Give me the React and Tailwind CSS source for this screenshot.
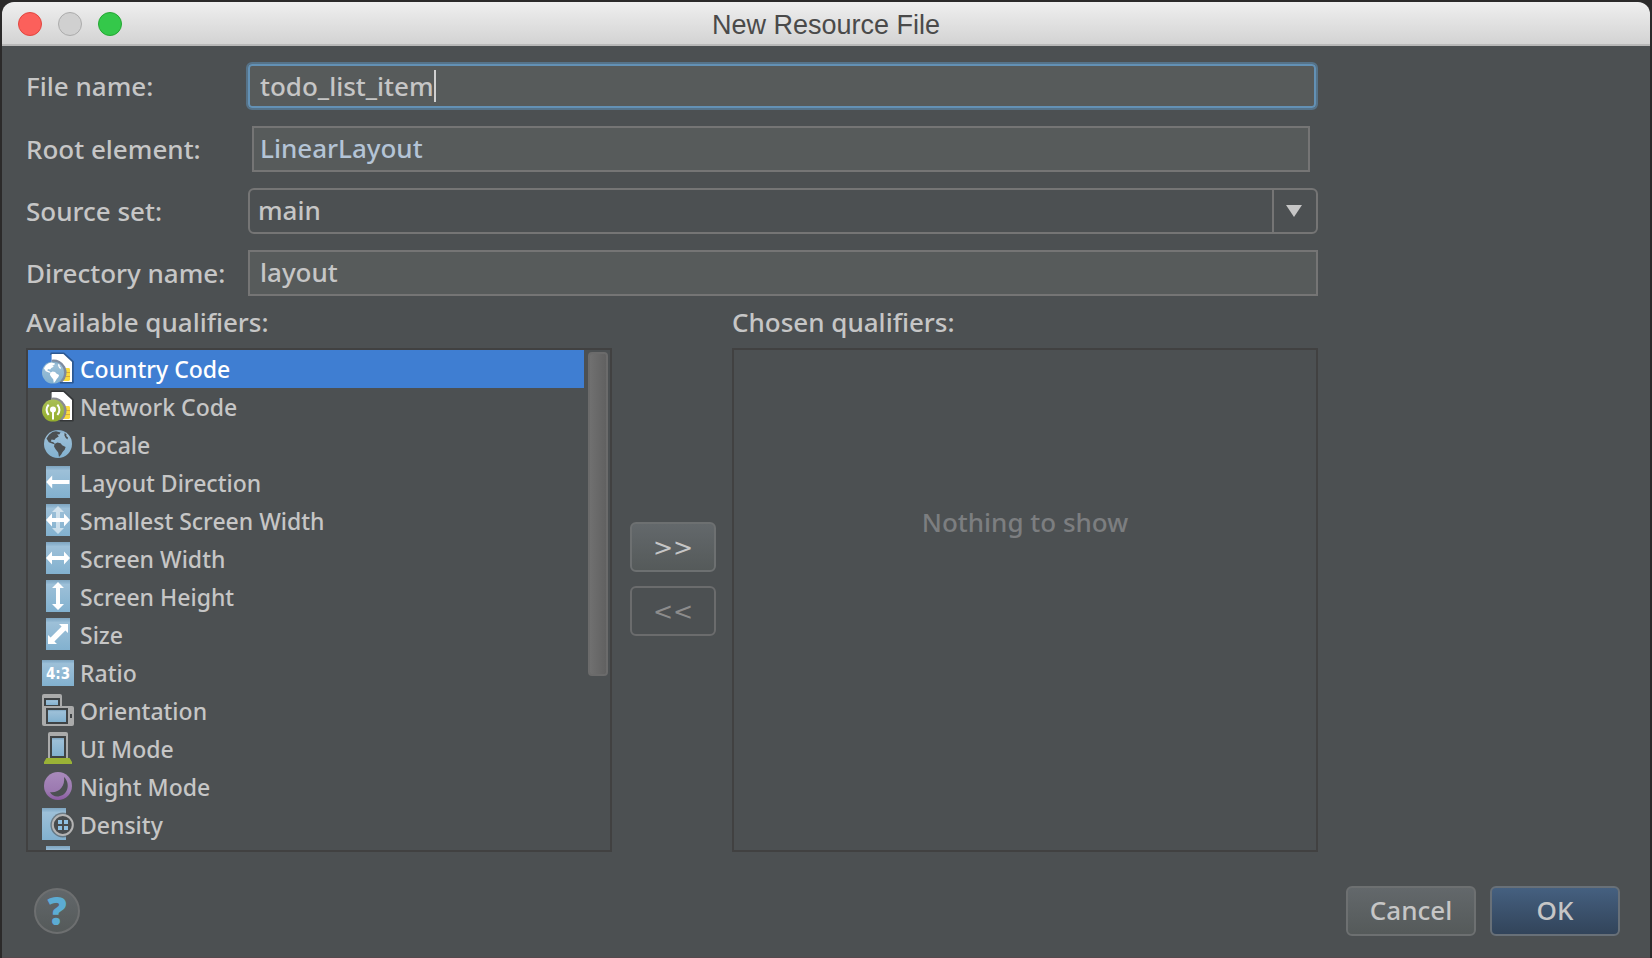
import React, { useState } from "react";

const tile = "url(#tile)";

function Icon({ children }) {
  return (
    <svg viewBox="0 0 32 32" className="mb-0.5 size-8 shrink-0" aria-hidden="true">
      {children}
    </svg>
  );
}

function Gradients() {
  return (
    <svg className="absolute size-0" aria-hidden="true">
      <defs>
        <linearGradient id="tile" x1="0" y1="0" x2="0" y2="1">
          <stop offset="0" stopColor="#7fa5bf" />
          <stop offset="0.09" stopColor="#8fb5d0" />
          <stop offset="0.14" stopColor="#9dc0d8" />
          <stop offset="1" stopColor="#82b1cf" />
        </linearGradient>
        <linearGradient id="green" x1="0" y1="0" x2="0" y2="1">
          <stop offset="0" stopColor="#a9bf56" />
          <stop offset="1" stopColor="#94ae2c" />
        </linearGradient>
        <linearGradient id="purple" x1="0" y1="0" x2="0" y2="1">
          <stop offset="0" stopColor="#a88abb" />
          <stop offset="0.7" stopColor="#9b78b0" />
          <stop offset="1" stopColor="#8c5ba3" />
        </linearGradient>
      </defs>
    </svg>
  );
}

function Continents({ fill }) {
  return (
    <g fill={fill}>
      <path d="M4.5 10.5 7 6.8 10.5 4 14 3.2 18.6 4.4 17.2 6.6 15.2 6.2 16.8 8.6 13.8 10.2 12.4 12 9.6 11.4 8.8 13.4 11.4 14.2 13.4 16.4 10.8 15.8 6.8 14.2Z" />
      <path d="M12.6 16 15.4 14.6 18.6 15.2 20.2 17.2 23.6 19 22.8 21.6 20.6 24 19.2 26.6 17 29 16.2 24.4 13.8 21.4 12 18.6Z" />
      <path d="M22.6 4.8 24.6 6.4 24.2 8 26 9.6 25.4 11.6 23.6 9.8 22.4 7.4Z" />
    </g>
  );
}

function SimCard({ gap }) {
  return (
    <>
      <path
        d="M9.4 3V1.4H21.8L30.8 9.8V30.6H18"
        fill="none"
        stroke="#000"
        strokeOpacity="0.3"
        strokeWidth="2"
        strokeLinejoin="round"
      />
      <path d="M9.6 2H21.4L30 10V30H12L9.6 20Z" fill="#fff" />
      <rect x="20" y="16" width="8" height="13" rx="1.4" fill="#fbdc3c" />
      <path d="M22 20.5H28M22 24.5H28" stroke="#d9a93c" strokeWidth="1.2" />
      <path d="M9.6 7.7A13 13 0 0 1 20.5 30H11V20Z" fill={gap} />
    </>
  );
}

function CountryIcon() {
  return (
    <Icon>
      <SimCard gap="#7d8ba0" />
      <circle cx="11" cy="20.6" r="11" fill={tile} />
      <g transform="translate(-1.6 8) scale(.79)">
        <Continents fill="#fff" />
      </g>
    </Icon>
  );
}

function NetworkIcon() {
  return (
    <Icon>
      <SimCard gap="#8a8c90" />
      <circle cx="11" cy="20.6" r="11" fill="url(#green)" />
      <circle cx="11" cy="19.6" r="3" fill="#fff" />
      <path
        d="M11 20V29.4M6.6 14.6Q2.6 19.8 6.6 25M15.4 14.6Q19.4 19.8 15.4 25"
        fill="none"
        stroke="#fff"
        strokeWidth="2"
      />
    </Icon>
  );
}

function LocaleIcon() {
  return (
    <Icon>
      <circle cx="16" cy="16" r="14" fill={tile} />
      <Continents fill="#4c5052" />
    </Icon>
  );
}

const horizontalArrow = "M4 16 10 9.6V14H22V9.6L28 16 22 22.4V18H10V22.4Z";
const verticalArrow = "M16 2 22 8H18V24H22L16 30 10 24H14V8H10Z";

function Tile({ children }) {
  return (
    <Icon>
      <rect x="4" width="24" height="32" fill={tile} />
      {children}
    </Icon>
  );
}

function DirectionIcon() {
  return (
    <Tile>
      <path d="M4.2 16 10.2 9.6V14H27.4V18H10.2V22.4Z" fill="#fff" />
    </Tile>
  );
}

function SmallestIcon() {
  return (
    <Tile>
      <path d={verticalArrow} fill="#fff" fillOpacity="0.55" />
      <path d={horizontalArrow} fill="#fff" />
    </Tile>
  );
}

function WidthIcon() {
  return (
    <Tile>
      <path d={horizontalArrow} fill="#fff" />
    </Tile>
  );
}

function HeightIcon() {
  return (
    <Tile>
      <path d={verticalArrow} fill="#fff" />
    </Tile>
  );
}

function SizeIcon() {
  return (
    <Tile>
      <path d="M26 6V15L23.4 12.4 12.4 23.4 15 26H6V17L8.6 19.6 19.6 8.6 17 6Z" fill="#fff" />
    </Tile>
  );
}

function RatioIcon() {
  return (
    <Icon>
      <rect y="4" width="32" height="26" fill={tile} />
      <text
        x="16"
        y="23"
        textAnchor="middle"
        fill="#fff"
        className="font-['DejaVu_Sans_Condensed','DejaVu_Sans',sans-serif] text-[15px] font-bold"
      >
        4:3
      </text>
    </Icon>
  );
}

function OrientationIcon() {
  return (
    <Icon>
      <rect width="20" height="20" rx="2" fill="#aaabab" />
      <rect x="2" y="4" width="16" height="8" fill="#3f4345" />
      <rect x="4" y="6" width="12" height="5" fill={tile} />
      <rect y="12" width="32" height="20" rx="2" fill="#aaabab" />
      <rect x="4" y="14" width="22" height="16" fill="#3f4345" />
      <rect x="6" y="16" width="18" height="12" fill={tile} />
      <rect x="28" y="20" width="2" height="4" fill="#3f4345" />
    </Icon>
  );
}

function UiModeIcon() {
  return (
    <Icon>
      <path d="M8 0H24A2 2 0 0 1 26 2V26H6V2A2 2 0 0 1 8 0Z" fill="#aaabab" />
      <rect x="8" y="4" width="16" height="22" fill="#3f4345" />
      <rect x="10" y="6" width="12" height="18" fill={tile} />
      <path d="M4.4 26H27.6L30 30V32H2V30Z" fill="#9ab236" />
    </Icon>
  );
}

function NightIcon() {
  return (
    <Icon>
      <circle cx="16" cy="16" r="14" fill="url(#purple)" />
      <path d="M22 7C29 14 25.6 25.6 16.4 26.4 12.4 26.7 9.6 24.8 8 22.2 17 23.4 23.4 16 22 7Z" fill="#4c5052" />
    </Icon>
  );
}

function DensityIcon() {
  return (
    <Icon>
      <rect width="24" height="32" fill={tile} />
      <circle cx="20.8" cy="17" r="12.4" fill="#4c5052" fillOpacity="0.6" />
      <circle cx="20.8" cy="17" r="10" fill="#484c4e" stroke="#b4b4b4" strokeWidth="2" />
      <path d="M16 12H20V16H16ZM22 12H26V16H22ZM16 18H20V22H16ZM22 18H26V22H22Z" fill="#8fc0e2" />
    </Icon>
  );
}

const qualifiers = [
  ["Country Code", CountryIcon],
  ["Network Code", NetworkIcon],
  ["Locale", LocaleIcon],
  ["Layout Direction", DirectionIcon],
  ["Smallest Screen Width", SmallestIcon],
  ["Screen Width", WidthIcon],
  ["Screen Height", HeightIcon],
  ["Size", SizeIcon],
  ["Ratio", RatioIcon],
  ["Orientation", OrientationIcon],
  ["UI Mode", UiModeIcon],
  ["Night Mode", NightIcon],
  ["Density", DensityIcon],
  ["", Tile],
];

const fieldBox = "h-[46px] w-full border-2 border-[#757575] bg-[#575b5b] pb-0.5 outline-none";

function Row({ id, label, children }) {
  return (
    <div className="grid grid-cols-[222px_1fr] items-center">
      <label htmlFor={id}>{label}</label>
      {children}
    </div>
  );
}

export default function App() {
  const [fileName, setFileName] = useState("todo_list_item");
  const [selected, setSelected] = useState(0);

  return (
    <div className="flex min-h-screen flex-col bg-[#2b2a2a] px-0.5 pt-0.5 font-['Noto_Sans','Open_Sans',sans-serif] text-[26px] leading-9 font-medium text-[#c6c6c6]">
      <Gradients />
      <header className="grid h-11 grid-cols-[1fr_auto_1fr] items-center rounded-t-xl bg-linear-to-b from-[#efefef] to-[#d2d2d2] px-4 inset-shadow-[0_-2px_0_#b8b8b8]">
        <div className="flex gap-4">
          <button aria-label="Close" className="size-6 rounded-full border border-[#e2463f] bg-[#fc605b]" />
          <button aria-label="Minimize" disabled className="size-6 rounded-full border border-[#acacac] bg-[#d0d0d0]" />
          <button aria-label="Zoom" className="size-6 rounded-full border border-[#24a732] bg-[#34c84a]" />
        </div>
        <h1 className="pt-0.5 font-['Liberation_Sans',sans-serif] text-[27px] font-normal text-[#4a4a4a]">New Resource File</h1>
      </header>

      <main className="flex flex-1 flex-col border-b border-[#54494d] bg-[#4c5052]">
        <form className="flex flex-col pt-4 pr-[332px] pl-6" onSubmit={(e) => e.preventDefault()}>
          <div className="flex flex-col gap-4">
            <Row id="file" label="File name:">
              <div className="-ml-0.5 flex h-12 items-center rounded-md border-2 border-[#567389] bg-[#575b5b] pl-3 inset-ring-2 inset-ring-[#6391b5]">
                <input
                  id="file"
                  value={fileName}
                  onChange={(e) => setFileName(e.target.value)}
                  className="field-sizing-content min-w-1 caret-transparent outline-none"
                />
                <span className="h-8 w-0.5 bg-[#d0d0d0]" />
              </div>
            </Row>
            <Row id="root" label="Root element:">
              <div className="pr-2 pl-1">
                <input id="root" defaultValue="LinearLayout" className={`${fieldBox} px-1.5 text-[#b4c4d6]`} />
              </div>
            </Row>
            <Row id="source" label="Source set:">
              <div className="grid h-[46px] items-stretch rounded-md border-2 border-[#757575]">
                <select id="source" className="col-start-1 row-start-1 appearance-none px-2 pb-0.5 outline-none">
                  <option>main</option>
                </select>
                <span className="pointer-events-none col-start-1 row-start-1 flex w-11 items-center justify-center justify-self-end border-l-2 border-[#757575] pr-0.5">
                  <svg viewBox="0 0 16 12" className="h-3 w-4" aria-hidden="true">
                    <path d="M0 0H16L8 12Z" fill="#c6c6c6" />
                  </svg>
                </span>
              </div>
            </Row>
            <Row id="directory" label="Directory name:">
              <input id="directory" defaultValue="layout" className={`${fieldBox} px-2.5`} />
            </Row>
          </div>

          <div className="grid grid-cols-[1fr_120px_1fr]">
            <h2 id="available" className="py-2">Available qualifiers:</h2>
            <h2 id="chosen" className="col-start-3 py-2">Chosen qualifiers:</h2>

            <div className="flex h-[504px] border-2 border-[#414141] text-[23px]">
              <ul role="listbox" aria-labelledby="available" className="flex-1 overflow-hidden">
                {qualifiers.map(([name, Glyph], i) => (
                  <li
                    key={name}
                    role="option"
                    aria-selected={i === selected}
                    onClick={() => setSelected(i)}
                    className={`flex h-[38px] items-center gap-1.5 pl-3.5 ${
                      i === selected ? "bg-[#3f7ed2] text-white" : ""
                    }`}
                  >
                    <Glyph />
                    {name}
                  </li>
                ))}
              </ul>
              <div className="w-[26px] py-0.5 pr-0.5 pl-1">
                <div className="h-[324px] rounded border-2 border-[#6b6b6b] bg-linear-to-r from-[#707070] to-[#616161]" />
              </div>
            </div>

            <div className="flex flex-col items-center justify-center gap-3.5 self-start pt-[174px] pl-0.5 font-['DejaVu_Sans',sans-serif] text-2xl">
              <button
                aria-label="Add qualifier"
                className="h-[50px] w-[86px] rounded-md border-2 border-[#6d7071] bg-linear-to-b from-[#63686b] to-[#555a5a] pt-0.5"
              >
                &gt;&gt;
              </button>
              <button
                aria-label="Remove qualifier"
                disabled
                className="h-[50px] w-[86px] rounded-md border-2 border-[#6b6c6d] pt-0.5 text-[#8c8c8c]"
              >
                &lt;&lt;
              </button>
            </div>

            <section
              aria-labelledby="chosen"
              className="h-[504px] border-2 border-[#414141] pt-[154px] text-center text-[#7c7e80]"
            >
              Nothing to show
            </section>
          </div>
        </form>

        <footer className="mt-[34px] flex items-center gap-3.5 pr-[30px] pb-5 pl-8">
          <button
            aria-label="Help"
            className="mr-auto size-[46px] rounded-full border-2 border-[#6d6f70] bg-linear-to-b from-[#62676a] to-[#555a5a] pb-0.5 font-['Open_Sans',sans-serif] text-[38px] leading-10 font-extrabold text-[#5cacd3]"
          >
            ?
          </button>
          <button className="h-[50px] w-[130px] rounded-md border-2 border-[#6d7071] bg-linear-to-b from-[#63686b] to-[#555a5a] pb-0.5">
            Cancel
          </button>
          <button className="h-[50px] w-[130px] rounded-md border-2 border-[#687078] bg-linear-to-b from-[#456080] to-[#32445a] pb-0.5">
            OK
          </button>
        </footer>
      </main>
    </div>
  );
}
